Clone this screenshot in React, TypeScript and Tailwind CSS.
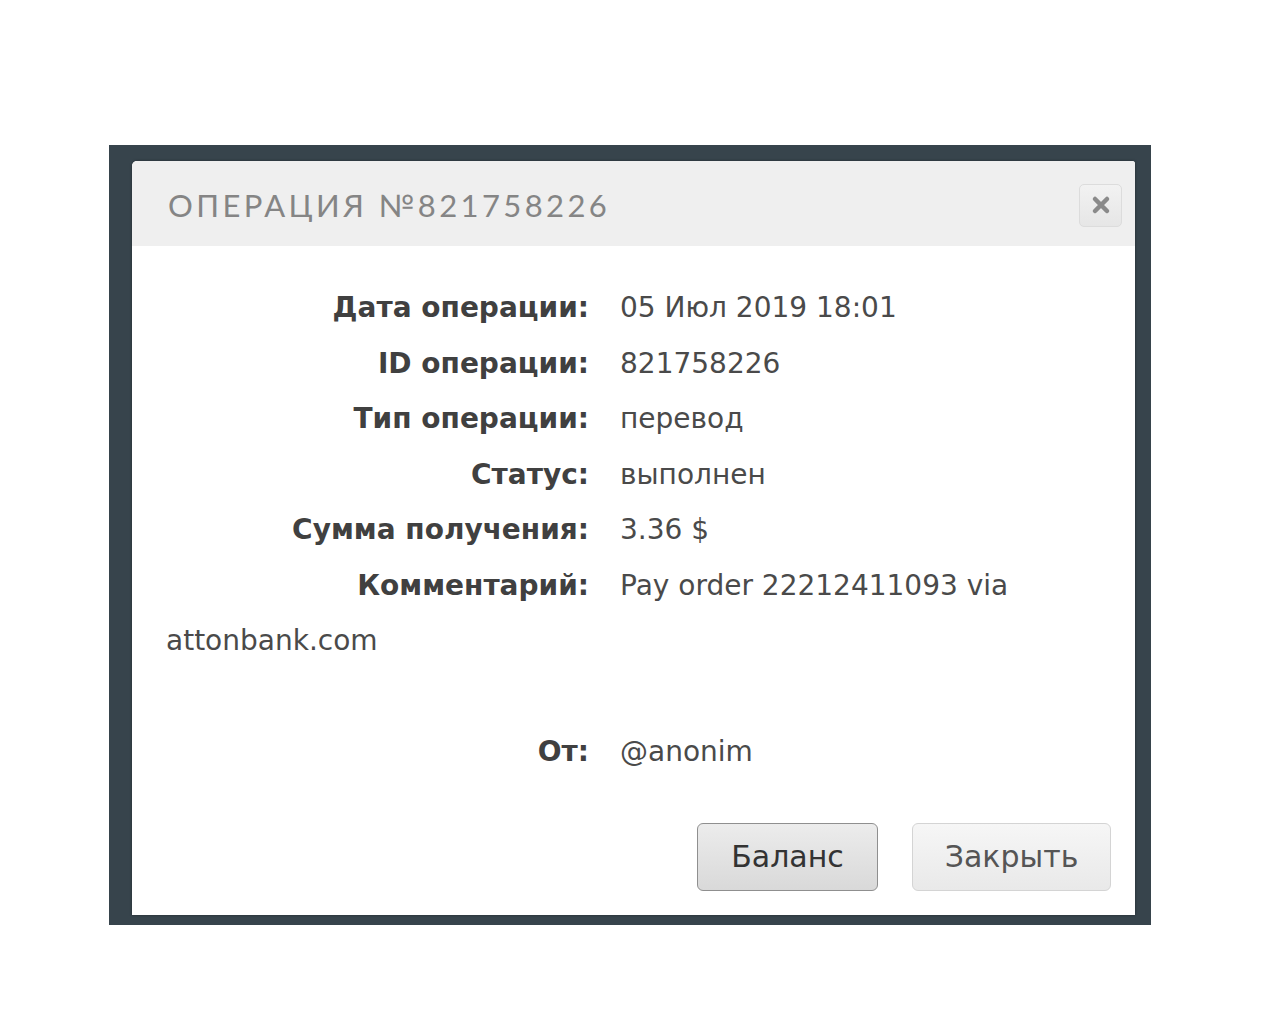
const rows: [string, string][] = [
  ["Дата операции:", "05 Июл 2019 18:01"],
  ["ID операции:", "821758226"],
  ["Тип операции:", "перевод"],
  ["Статус:", "выполнен"],
  ["Сумма получения:", "3.36 $"],
  ["Комментарий:", "Pay order 22212411093 via"],
];

const Row = ({ label, value }: { label: string; value: string }) => (
  <p className="m-0 leading-[55.5px]">
    <span className="inline-block w-[454px] pr-[31px] text-right font-bold text-[#404040]">
      {label}
    </span>
    <span className="text-[#4a4a4a]">{value}</span>
  </p>
);

export default function App() {
  return (
    <div className="min-h-[1024px] w-[1280px] bg-white pt-[145px]">
      <div className="ml-[109px] w-[1042px] bg-[#37444c] pb-[10px] pl-[23px] pr-[16px] pt-[16px]">
        <div
          className="overflow-hidden rounded-tl-[5px] rounded-tr-[3px] bg-white shadow-[0_0_3px_rgba(0,0,0,0.4)]"
          style={{ fontFamily: "'DejaVu Sans', Verdana, sans-serif" }}
        >
          <div className="flex h-[85px] items-center justify-between bg-[#efefef] pl-[36px] pr-[13px]">
            <h1
              className="m-0 mt-[3px] text-[31px] font-normal tracking-[3.4px] text-[#858585]"
              style={{ fontFamily: "Lato, 'Noto Sans', sans-serif" }}
            >
              ОПЕРАЦИЯ №821758226
            </h1>
            <button className="mt-[3px] flex h-[43px] w-[43px] items-center justify-center rounded-[5px] border border-[#dcdcdc] bg-gradient-to-b from-[#f2f2f2] to-[#e6e6e6]">
              <svg width="20" height="20" viewBox="0 0 20 20">
                <path d="M4 4L16 16M16 4L4 16" stroke="#8a8a8a" strokeWidth="4.5" strokeLinecap="round" />
              </svg>
            </button>
          </div>
          <div className="px-[34px] pt-[34px] text-[28px]">
            <div className="w-[920px]">
              {rows.map(([l, v]) => (
                <Row key={l} label={l} value={v} />
              ))}
              <p className="m-0 leading-[55.5px] text-[#4a4a4a]">attonbank.com</p>
              <div className="h-[55.5px]" />
              <Row label="От:" value="@anonim" />
            </div>
          </div>
          <div className="flex justify-end gap-[34px] pb-[24px] pr-[24px] pt-[43px] text-[30px]">
            <button className="h-[68px] w-[181px] rounded-[6px] border border-[#8f8f8f] bg-gradient-to-b from-[#ececec] to-[#d9d9d9] text-[#333]">
              Баланс
            </button>
            <button className="h-[68px] w-[199px] rounded-[6px] border border-[#d4d4d4] bg-gradient-to-b from-[#f6f6f6] to-[#e9e9e9] text-[#555]">
              Закрыть
            </button>
          </div>
        </div>
      </div>
    </div>
  );
}
